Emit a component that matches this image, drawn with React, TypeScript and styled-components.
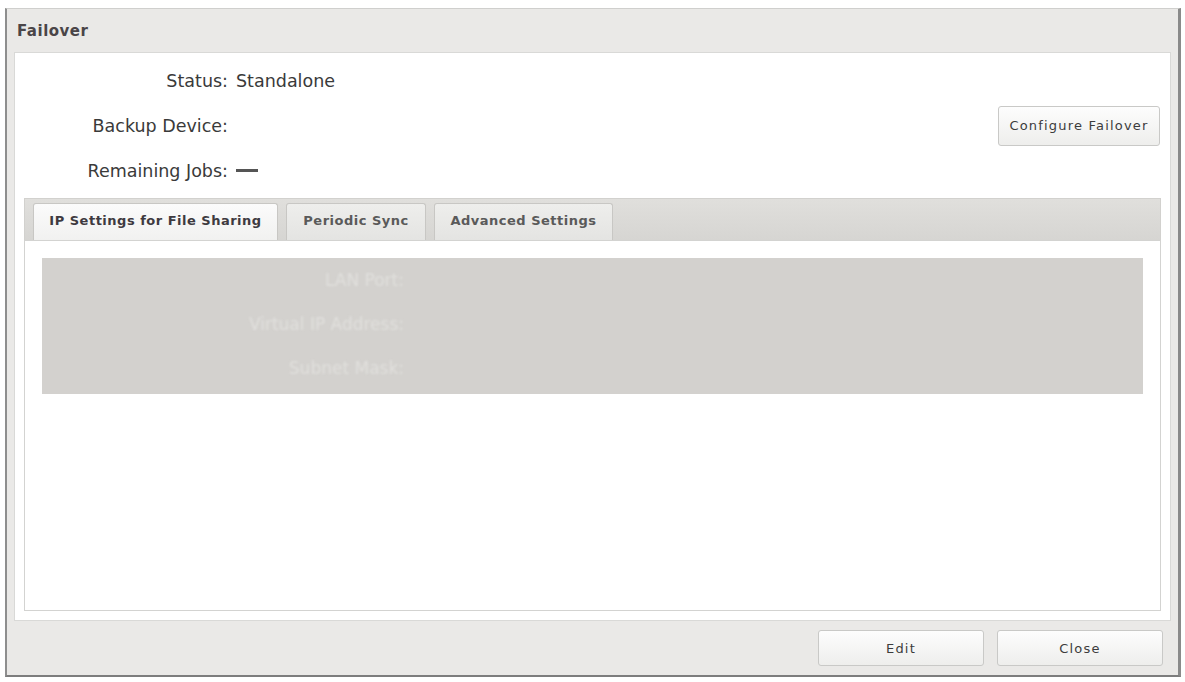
import React from "react";
import styled, { createGlobalStyle } from "styled-components";

const GlobalStyle = createGlobalStyle`
  html, body {
    margin: 0;
    padding: 0;
    background: #ffffff;
  }
  body {
    font-family: "DejaVu Sans", sans-serif;
  }
`;

const Page = styled.div`
  padding: 8px 0 0 5px;
`;

const Window = styled.div`
  width: 1176px;
  height: 669px;
  box-sizing: border-box;
  display: flex;
  flex-direction: column;
  background: #eae9e7;
  border-top: 1px solid #cfcfcd;
  border-left: 2px solid #8e8e8e;
  border-right: 3px solid #8a8a8a;
  border-bottom: 2px solid #7d7d7d;
`;

const TitleBar = styled.div`
  height: 43px;
  display: flex;
  align-items: center;
  padding-left: 10px;
  font-family: "DejaVu Sans", sans-serif;
  font-weight: bold;
  font-size: 15px;
  letter-spacing: 0.5px;
  color: #4a4548;
`;

const Panel = styled.div`
  flex: 1;
  margin: 0 7px;
  background: #ffffff;
  border: 1px solid #d9d9d7;
  display: flex;
  flex-direction: column;
  padding: 5px 9px 9px 9px;
`;

const Top = styled.div`
  display: flex;
  align-items: center;
  padding-right: 1px;
`;

const InfoList = styled.div`
  flex: 1;
  display: grid;
  grid-template-columns: 204px 1fr;
  grid-auto-rows: 45px;
  column-gap: 8px;
  align-items: center;
  font-family: "DejaVu Sans", sans-serif;
  font-size: 17.5px;
  color: #3a3a3a;
`;

const Label = styled.div`
  text-align: right;
`;

const Value = styled.div`
  display: flex;
  align-items: center;
`;

const Dash = styled.span`
  display: inline-block;
  width: 22px;
  height: 3px;
  background: #555;
`;

const Button = styled.button<{ $w: number; $h: number }>`
  width: ${(p) => p.$w}px;
  height: ${(p) => p.$h}px;
  background: linear-gradient(#fdfdfd, #eeeeec);
  border: 1px solid #c9c9c7;
  border-radius: 3px;
  font-family: "DejaVu Sans", sans-serif;
  font-size: 13px;
  font-weight: normal;
  letter-spacing: 1.2px;
  color: #3c3c3c;
  cursor: pointer;
`;

const Tabs = styled.div`
  margin-top: 5px;
  flex: 1;
  display: flex;
  flex-direction: column;
`;

const TabStrip = styled.div`
  height: 42px;
  box-sizing: border-box;
  display: flex;
  align-items: flex-end;
  gap: 8px;
  padding-left: 8px;
  background: linear-gradient(#e0dfdc, #d6d5d2);
  border: 1px solid #d2d1ce;
  border-bottom: none;
`;

const Tab = styled.div<{ $active?: boolean; $w: number }>`
  width: ${(p) => p.$w}px;
  height: 37px;
  box-sizing: border-box;
  display: flex;
  align-items: center;
  justify-content: center;
  border: 1px solid #c8c7c4;
  border-bottom: none;
  border-radius: 3px 3px 0 0;
  background: ${(p) =>
    p.$active ? "linear-gradient(#fbfbfb, #f1f1f0)" : "linear-gradient(#eeeeec, #e4e4e2)"};
  font-family: "DejaVu Sans", sans-serif;
  font-weight: bold;
  font-size: 13px;
  letter-spacing: 0.5px;
  color: ${(p) => (p.$active ? "#3e3a40" : "#5a5a5a")};
  padding-bottom: 4px;
`;

const TabBody = styled.div`
  flex: 1;
  background: #ffffff;
  border: 1px solid #d3d3d1;
  padding: 17px 17px;
`;

const Disabled = styled.div`
  background: #d3d1ce;
  height: 136px;
  display: grid;
  grid-template-columns: 362px 1fr;
  grid-auto-rows: 44px;
  align-items: center;
  font-family: "DejaVu Sans", sans-serif;
  font-size: 17px;
  color: #e1e0dd;
`;

const FadedLabel = styled.div`
  text-align: right;
  filter: blur(0.8px);
`;

const Footer = styled.div`
  height: 54px;
  display: flex;
  align-items: center;
  justify-content: flex-end;
  gap: 13px;
  padding-right: 15px;
`;

export default function App() {
  return (
    <>
      <GlobalStyle />
      <Page>
        <Window>
          <TitleBar>Failover</TitleBar>
          <Panel>
            <Top>
              <InfoList>
                <Label>Status:</Label>
                <Value>Standalone</Value>
                <Label>Backup Device:</Label>
                <Value />
                <Label>Remaining Jobs:</Label>
                <Value>
                  <Dash />
                </Value>
              </InfoList>
              <Button $w={162} $h={40}>
                Configure Failover
              </Button>
            </Top>
            <Tabs>
              <TabStrip>
                <Tab $active $w={245}>
                  IP Settings for File Sharing
                </Tab>
                <Tab $w={140}>Periodic Sync</Tab>
                <Tab $w={179}>Advanced Settings</Tab>
              </TabStrip>
              <TabBody>
                <Disabled>
                  <FadedLabel>LAN Port:</FadedLabel>
                  <div />
                  <FadedLabel>Virtual IP Address:</FadedLabel>
                  <div />
                  <FadedLabel>Subnet Mask:</FadedLabel>
                  <div />
                </Disabled>
              </TabBody>
            </Tabs>
          </Panel>
          <Footer>
            <Button $w={166} $h={36}>Edit</Button>
            <Button $w={166} $h={36}>Close</Button>
          </Footer>
        </Window>
      </Page>
    </>
  );
}
